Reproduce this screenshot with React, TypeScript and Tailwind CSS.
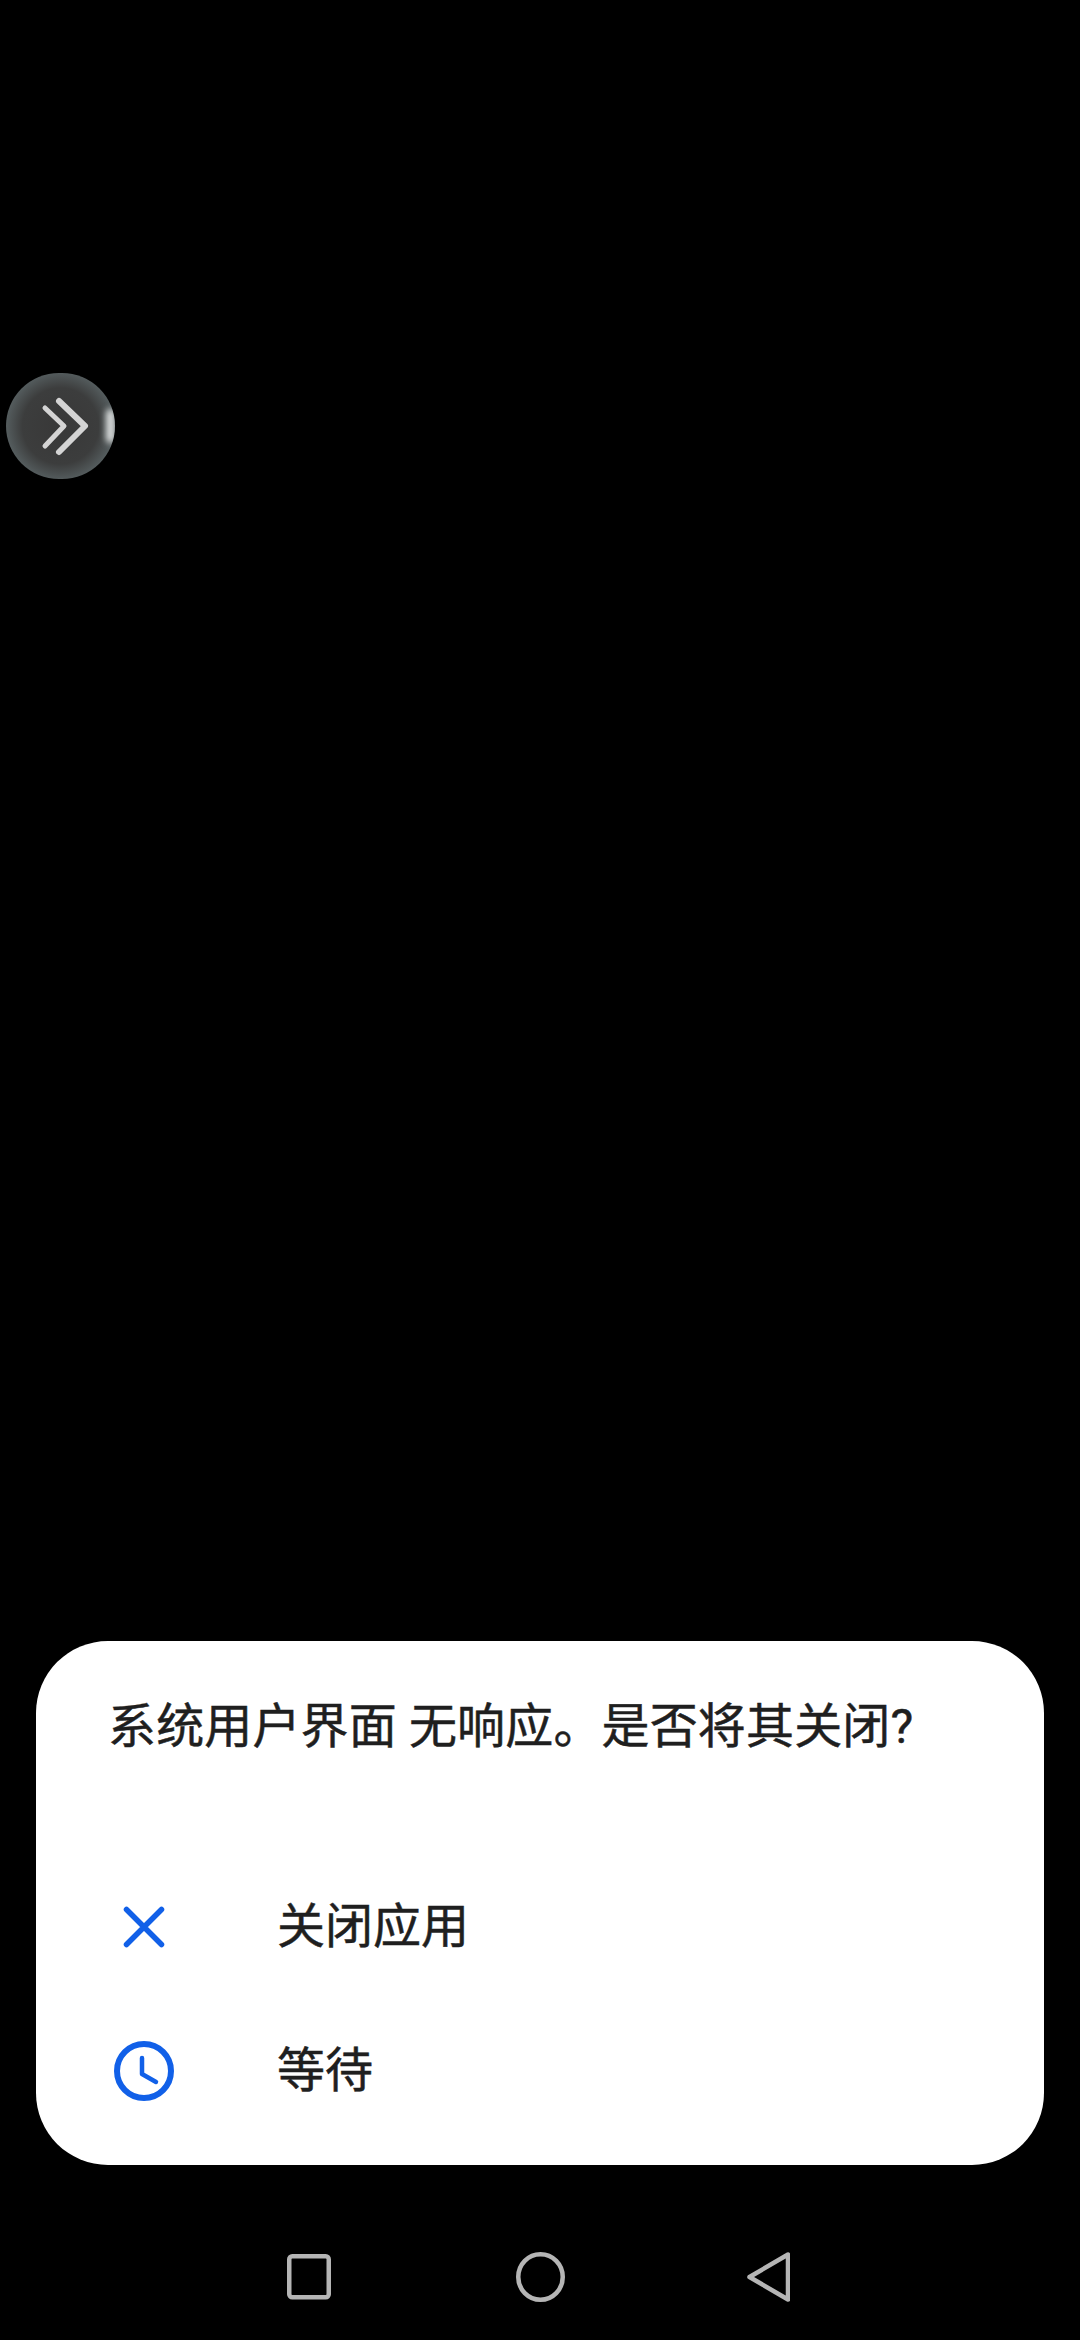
const font = { fontFamily: 'Roboto, "Noto Sans CJK SC", "Liberation Sans", sans-serif' };

function CloseIcon() {
  return (
    <svg width="60" height="60" viewBox="0 0 60 60" fill="none" stroke="#1160e8" strokeWidth="5.5" strokeLinecap="round">
      <path d="M12.5 12.5 L47.5 47.5 M47.5 12.5 L12.5 47.5" />
    </svg>
  );
}

function ClockIcon() {
  return (
    <svg width="60" height="60" viewBox="0 0 60 60" fill="none" stroke="#1160e8" strokeLinecap="round" strokeLinejoin="round">
      <circle cx="30" cy="30" r="27" strokeWidth="6" />
      <path d="M28 17 V33 L42 41" strokeWidth="4.5" />
    </svg>
  );
}

function FloatingBall() {
  return (
    <div className="absolute left-[6px] top-[373px] w-[109px] h-[106px] rounded-full overflow-hidden bg-[radial-gradient(circle_at_50%_50%,#383838_0%,#3c3d3d_50%,#5c6668_78%,#8b9a9c_94%,#b0bbbc_100%)] flex items-center justify-center">
      <div className="absolute right-[0px] top-[36px] w-[9px] h-[34px] rounded-full bg-[#dcdfdf] blur-[3px]" />
      <svg width="109" height="106" viewBox="0 0 109 106" fill="none" stroke="#d4d4d4" strokeLinecap="round" strokeLinejoin="round" className="relative">
        <path d="M39 35 L58 53 L39 73" strokeWidth="5" />
        <path d="M53 28 L79 53 L53 79" strokeWidth="6" />
      </svg>
    </div>
  );
}

export default function App() {
  return (
    <div className="relative w-[1080px] h-[2340px] bg-black flex flex-col justify-end overflow-hidden" style={font}>
      <FloatingBall />

      <div className="mx-[36px] h-[524px] rounded-[72px] bg-white text-[#1f1f1f] flex flex-col [-webkit-text-stroke:0.5px_#1f1f1f]">
        <div className="pl-[72px] pt-[51px] text-[48px] leading-[70px] tracking-[0.15px] whitespace-pre">系统用户界面 无响应。是否将其关闭?</div>

        <div className="mt-[93px] flex flex-col">
          <div className="h-[144px] flex items-center pl-[78px] gap-[103px]">
            <CloseIcon />
            <span className="text-[48px]">关闭应用</span>
          </div>
          <div className="h-[144px] flex items-center pl-[78px] gap-[103px]">
            <ClockIcon />
            <span className="text-[48px]">等待</span>
          </div>
        </div>
      </div>

      <div className="h-[175px] flex items-start pl-[287px] pt-[87px]">
        <svg width="44" height="46" viewBox="0 0 44 46" fill="none" stroke="#b5b5b5" strokeWidth="4.5" className="mt-[2px]">
          <rect x="2.25" y="2.25" width="39.5" height="41" rx="3" />
        </svg>
        <svg className="ml-[185px]" width="49" height="50" viewBox="0 0 49 50" fill="none" stroke="#b5b5b5" strokeWidth="4.5">
          <ellipse cx="24.5" cy="25" rx="22.25" ry="22.75" />
        </svg>
        <svg className="ml-[182px]" width="43" height="50" viewBox="0 0 43 50" fill="none" stroke="#b5b5b5" strokeWidth="4.5" strokeLinejoin="round">
          <path d="M41 2.5 V47.5 L2.5 25 Z" />
        </svg>
      </div>
    </div>
  );
}
